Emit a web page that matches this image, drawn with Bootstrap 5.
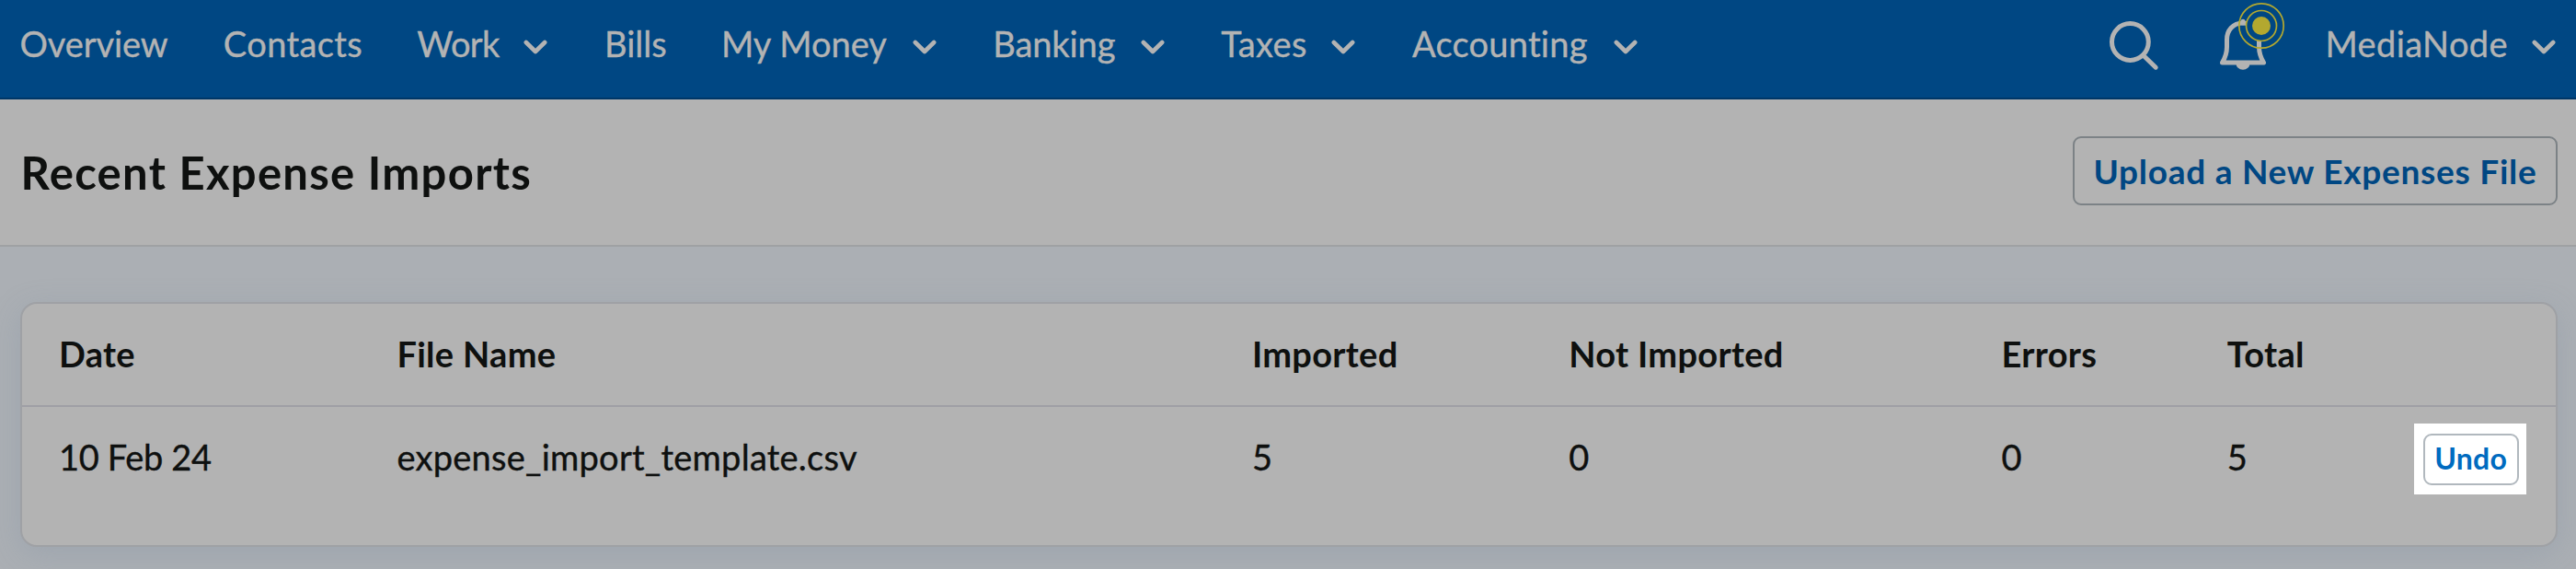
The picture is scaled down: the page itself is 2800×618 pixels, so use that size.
<!DOCTYPE html>
<html lang="en">
<head>
<meta charset="utf-8">
<meta name="viewport" content="width=device-width, initial-scale=1">
<title>Recent Expense Imports</title>
<link href="https://cdn.jsdelivr.net/npm/bootstrap@5.3.0/dist/css/bootstrap.min.css" rel="stylesheet">
<style>
  body { font-family: Lato, "Liberation Sans", sans-serif; font-size: 38px; line-height: 46px; color: #0e100f; background: #abafb4; height: 618px; overflow: hidden; }
  .top-nav { height: 108px; background: #004783; border-bottom: 2px solid #003767; padding: 0 22px 13px 21.5px; }
  .top-nav a { color: #b3b3b3; text-decoration: none; white-space: nowrap; -webkit-text-stroke: .4px currentColor; }
  .menu-grid { display: grid; grid-template-columns: 221.3px 210.5px 203.7px 127px 295.3px 248px 207.7px 306.5px; }
  .menu-grid a { padding-right: 61.5px; }
  .chev { width: 26px; height: 16px; margin-top: 8px; fill: none; stroke: #b3b3b3; stroke-width: 4.6; stroke-linecap: round; stroke-linejoin: round; }
  .user-chev { margin-left: 26px; }
  .ls-a { letter-spacing: -.1px; } .ls-b { letter-spacing: .4px; } .ls-c { letter-spacing: -.6px; } .ls-d { letter-spacing: .25px; } .ls-e { letter-spacing: -.35px; }
  .page-head { height: 160px; background: #b3b3b3; border-bottom: 2px solid #9fa1a3; padding: 0 20px 0 22.5px; }
  .page-head h1 { font-size: 49px; line-height: 58px; font-weight: 700; letter-spacing: 1.3px; }
  .btn-line { font-weight: 700; background: transparent; border: 2px solid #7c8286; color: #004783; display: inline-flex; align-items: center; justify-content: center; padding: 0; }
  .btn-upload { width: 527px; height: 75px; font-size: 37px; border-radius: 9px; letter-spacing: .73px; margin-bottom: 3px; }
  .btn-undo { width: 104px; height: 56px; font-size: 32px; border-radius: 9px; letter-spacing: .3px; background: #fff; border-color: #b1b8be; color: #006bc0; padding-bottom: 2px; }
  .imports { margin: 60px 20px 0 22px; height: 266px; background: #b3b3b3; border: 2px solid #9fa1a5; border-radius: 18px; box-shadow: 0 8px 32px rgba(125,142,162,.3); }
  .line { display: grid; grid-template-columns: 367.4px 929.5px 344.4px 470.3px 245.2px 202.9px auto; align-items: center; padding-left: 40px; height: 110px; white-space: nowrap; }
  .line-head { font-weight: 700; letter-spacing: .3px; border-bottom: 2px solid #9f9fa5; height: 112px; padding-bottom: 3px; }
  .line-row { height: 113px; padding-bottom: 0; }
  .line-row > span { margin-bottom: 6px; -webkit-text-stroke: .4px currentColor; }
  .spot { width: 122px; height: 77px; background: #fff; }
  .spot .btn-undo { position: relative; left: 1px; }
</style>
</head>
<body>
<nav class="top-nav d-flex justify-content-between align-items-center">
  <div class="menu-grid">
    <a href="#" class="ls-a">Overview</a>
    <a href="#" class="ls-b">Contacts</a>
    <a href="#" class="d-flex align-items-center justify-content-between"><span class="ls-c">Work</span><svg class="chev" viewBox="0 0 26 16"><path d="M2.8 3 13 13 23.2 3"/></svg></a>
    <a href="#">Bills</a>
    <a href="#" class="d-flex align-items-center justify-content-between"><span>My Money</span><svg class="chev" viewBox="0 0 26 16"><path d="M2.8 3 13 13 23.2 3"/></svg></a>
    <a href="#" class="d-flex align-items-center justify-content-between"><span class="ls-a">Banking</span><svg class="chev" viewBox="0 0 26 16"><path d="M2.8 3 13 13 23.2 3"/></svg></a>
    <a href="#" class="d-flex align-items-center justify-content-between"><span class="ls-b">Taxes</span><svg class="chev" viewBox="0 0 26 16"><path d="M2.8 3 13 13 23.2 3"/></svg></a>
    <a href="#" class="d-flex align-items-center justify-content-between"><span class="ls-d">Accounting</span><svg class="chev" viewBox="0 0 26 16"><path d="M2.8 3 13 13 23.2 3"/></svg></a>
  </div>
  <div class="d-flex align-items-center">
    <a href="#" aria-label="Search"><svg class="d-block" width="118" height="93" viewBox="0 0 118 93" fill="none" stroke="#b3b3b3" stroke-width="5" stroke-linecap="round"><circle cx="25.4" cy="45.5" r="19.9"/><path d="M40.5 61 53.2 73.2"/></svg></a>
    <a href="#" aria-label="Notifications"><svg class="d-block" width="119" height="93" viewBox="0 0 119 93" fill="none" stroke="#b3b3b3" stroke-width="5" stroke-linejoin="round">
      <path d="M7.5 68C10.5 63 12.5 58 12.5 51V43C12.5 33 19 25 30 25S47.5 33 47.5 43V51C47.5 58 49.5 63 52.5 68Z"/>
      <path d="M22.5 69a7.5 6.7 0 0 0 15 0Z" fill="#b3b3b3" stroke="none"/>
      <path d="M30 23.2V25" stroke-linecap="round"/>
      <circle cx="50" cy="28" r="16.5" fill="#004783" stroke="#b3a82f" stroke-width="1.7"/>
      <circle cx="50" cy="28" r="24.2" stroke="#b3a82f" stroke-width="1.7"/>
      <circle cx="50" cy="28" r="10" fill="#b3a82f" stroke="none"/></svg></a>
    <a href="#" class="d-flex align-items-center"><span class="ls-b">MediaNode</span><svg class="chev user-chev" viewBox="0 0 26 16"><path d="M2.8 3 13 13 23.2 3"/></svg></a>
  </div>
</nav>
<header class="page-head d-flex justify-content-between align-items-center">
  <h1 class="mb-0">Recent Expense Imports</h1>
  <button class="btn btn-line btn-upload" type="button">Upload a New Expenses File</button>
</header>
<main class="imports">
  <div class="line line-head"><span>Date</span><span>File Name</span><span>Imported</span><span>Not Imported</span><span>Errors</span><span>Total</span></div>
  <div class="line line-row"><span class="ls-e">10 Feb 24</span><span class="ls-d">expense_import_template.csv</span><span>5</span><span>0</span><span>0</span><span>5</span>
    <div class="spot d-flex align-items-center justify-content-center"><button class="btn btn-line btn-undo" type="button">Undo</button></div></div>
</main>
<script src="https://cdn.jsdelivr.net/npm/bootstrap@5.3.0/dist/js/bootstrap.bundle.min.js"></script>
</body>
</html>
